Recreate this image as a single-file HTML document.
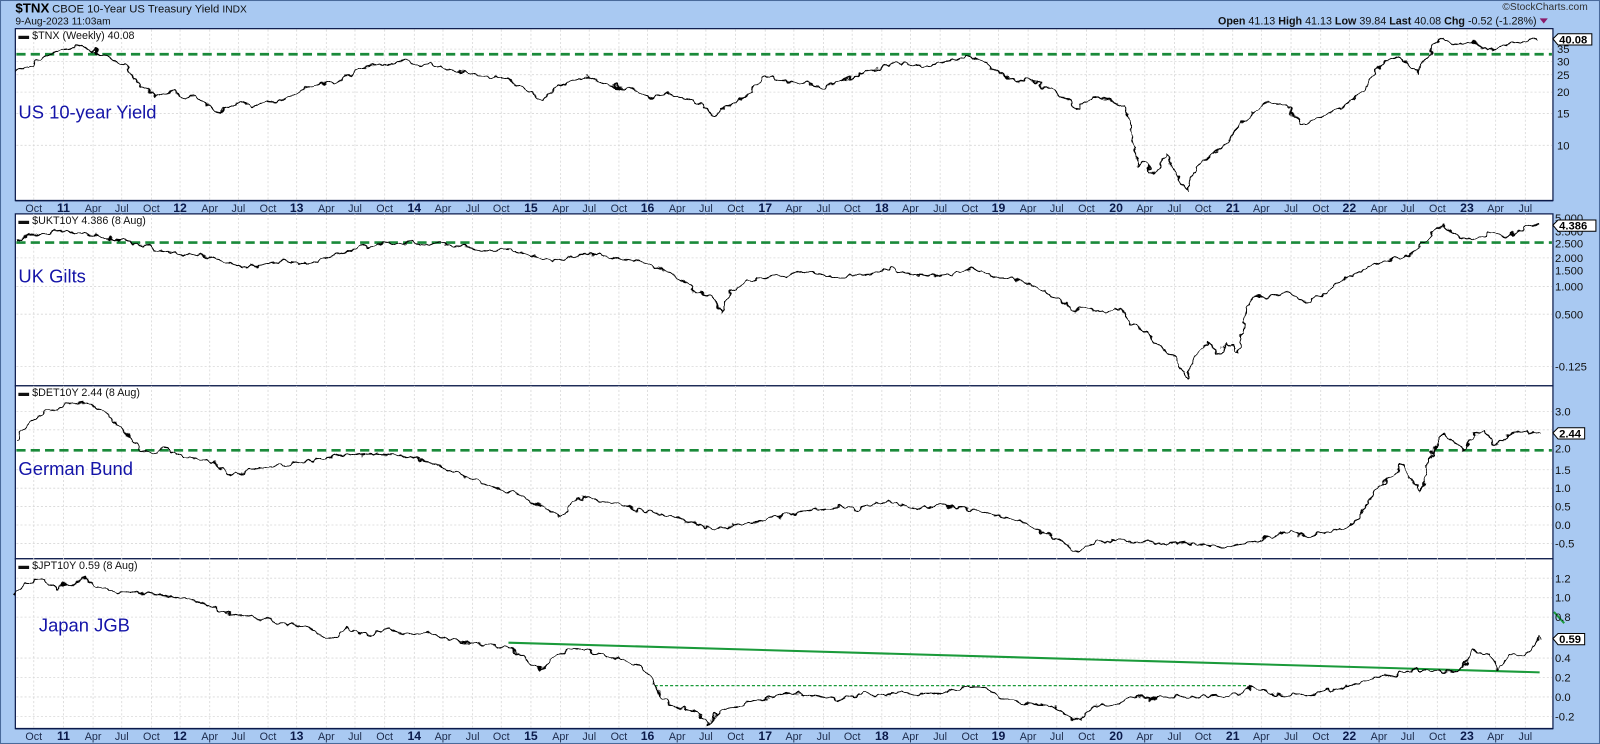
<!DOCTYPE html>
<html><head><meta charset="utf-8"><style>
html,body{margin:0;padding:0;background:#a9c9f2;}
svg{display:block;}
text{font-family:"Liberation Sans",Arial,sans-serif;}
.ax{font-size:10.5px;fill:#1c2a4a;text-anchor:middle;}
.yr{font-size:12px;font-weight:bold;fill:#0b1a4a;text-anchor:middle;}
.rl{font-size:11px;fill:#111;}
.lab{font-size:18px;fill:#1414a8;}
.ph{font-size:10.5px;fill:#111;}
.ser{fill:none;stroke:#000;stroke-width:1.3;stroke-linejoin:round;filter:url(#jit);}
.dash{stroke:#1a8a3a;stroke-width:2.6;stroke-dasharray:9,5;}
.grid line{stroke:#d8d8d8;stroke-width:0.8;stroke-dasharray:2,2;}
</style></head><body>
<svg width="1600" height="744" viewBox="0 0 1564 727" preserveAspectRatio="none" xmlns="http://www.w3.org/2000/svg">
<defs>
<filter id="jit" filterUnits="userSpaceOnUse" x="0" y="0" width="1564" height="727">
<feTurbulence type="fractalNoise" baseFrequency="0.12 0.12" numOctaves="2" seed="5" result="t"/>
<feDisplacementMap in="SourceGraphic" in2="t" scale="9" xChannelSelector="R" yChannelSelector="G"/>
</filter>
</defs>
<rect x="0" y="0" width="1564" height="727" fill="#a9c9f2"/>
<rect x="0.5" y="0.5" width="1563" height="726" fill="none" stroke="#4a6a9a"/>
<text x="15" y="12" font-size="13" font-weight="bold" fill="#000">$TNX</text>
<text x="51" y="12" font-size="11" fill="#111">CBOE 10-Year US Treasury Yield <tspan font-size="10">INDX</tspan></text>
<text x="15" y="24" font-size="10" fill="#111">9-Aug-2023 11:03am</text>
<text x="1552" y="10" font-size="10" fill="#333" text-anchor="end">©StockCharts.com</text>
<text x="1502" y="24" font-size="10.5" fill="#111" text-anchor="end"><tspan font-weight="bold">Open</tspan> 41.13 <tspan font-weight="bold">High</tspan> 41.13 <tspan font-weight="bold">Low</tspan> 39.84 <tspan font-weight="bold">Last</tspan> 40.08 <tspan font-weight="bold">Chg</tspan> -0.52 (-1.28%)</text>
<path d="M1505 18 L1513 18 L1509 23 Z" fill="#8a1a6a"/>

<rect x="15" y="28" width="1503" height="168" fill="#fff" stroke="#0b1a4a" stroke-width="1.2"/>
<rect x="15" y="209" width="1503" height="168" fill="#fff" stroke="#0b1a4a" stroke-width="1.2"/>
<rect x="15" y="377" width="1503" height="169" fill="#fff" stroke="#0b1a4a" stroke-width="1.2"/>
<rect x="15" y="546" width="1503" height="166" fill="#fff" stroke="#0b1a4a" stroke-width="1.2"/>
<line x1="15" y1="196" x2="1518" y2="196" stroke="#0b1a4a" stroke-width="1.5"/>
<line x1="15" y1="712" x2="1518" y2="712" stroke="#0b1a4a" stroke-width="1.5"/>

<g class="grid">
<line x1="33" y1="29" x2="33" y2="711"/><line x1="62" y1="29" x2="62" y2="711"/><line x1="91" y1="29" x2="91" y2="711"/><line x1="119" y1="29" x2="119" y2="711"/><line x1="148" y1="29" x2="148" y2="711"/><line x1="176" y1="29" x2="176" y2="711"/><line x1="205" y1="29" x2="205" y2="711"/><line x1="233" y1="29" x2="233" y2="711"/><line x1="262" y1="29" x2="262" y2="711"/><line x1="290" y1="29" x2="290" y2="711"/><line x1="319" y1="29" x2="319" y2="711"/><line x1="347" y1="29" x2="347" y2="711"/><line x1="376" y1="29" x2="376" y2="711"/><line x1="405" y1="29" x2="405" y2="711"/><line x1="433" y1="29" x2="433" y2="711"/><line x1="462" y1="29" x2="462" y2="711"/><line x1="490" y1="29" x2="490" y2="711"/><line x1="519" y1="29" x2="519" y2="711"/><line x1="548" y1="29" x2="548" y2="711"/><line x1="576" y1="29" x2="576" y2="711"/><line x1="605" y1="29" x2="605" y2="711"/><line x1="633" y1="29" x2="633" y2="711"/><line x1="662" y1="29" x2="662" y2="711"/><line x1="690" y1="29" x2="690" y2="711"/><line x1="719" y1="29" x2="719" y2="711"/><line x1="748" y1="29" x2="748" y2="711"/><line x1="776" y1="29" x2="776" y2="711"/><line x1="805" y1="29" x2="805" y2="711"/><line x1="833" y1="29" x2="833" y2="711"/><line x1="862" y1="29" x2="862" y2="711"/><line x1="890" y1="29" x2="890" y2="711"/><line x1="919" y1="29" x2="919" y2="711"/><line x1="948" y1="29" x2="948" y2="711"/><line x1="976" y1="29" x2="976" y2="711"/><line x1="1005" y1="29" x2="1005" y2="711"/><line x1="1033" y1="29" x2="1033" y2="711"/><line x1="1062" y1="29" x2="1062" y2="711"/><line x1="1091" y1="29" x2="1091" y2="711"/><line x1="1119" y1="29" x2="1119" y2="711"/><line x1="1148" y1="29" x2="1148" y2="711"/><line x1="1176" y1="29" x2="1176" y2="711"/><line x1="1205" y1="29" x2="1205" y2="711"/><line x1="1233" y1="29" x2="1233" y2="711"/><line x1="1262" y1="29" x2="1262" y2="711"/><line x1="1291" y1="29" x2="1291" y2="711"/><line x1="1319" y1="29" x2="1319" y2="711"/><line x1="1348" y1="29" x2="1348" y2="711"/><line x1="1376" y1="29" x2="1376" y2="711"/><line x1="1405" y1="29" x2="1405" y2="711"/><line x1="1434" y1="29" x2="1434" y2="711"/><line x1="1462" y1="29" x2="1462" y2="711"/><line x1="1491" y1="29" x2="1491" y2="711"/>
<line x1="16" y1="48" x2="1517" y2="48"/><line x1="16" y1="60" x2="1517" y2="60"/><line x1="16" y1="73" x2="1517" y2="73"/><line x1="16" y1="90" x2="1517" y2="90"/><line x1="16" y1="111" x2="1517" y2="111"/><line x1="16" y1="142" x2="1517" y2="142"/>
<line x1="16" y1="252" x2="1517" y2="252"/><line x1="16" y1="280" x2="1517" y2="280"/><line x1="16" y1="307" x2="1517" y2="307"/><line x1="16" y1="358" x2="1517" y2="358"/>
<line x1="16" y1="402" x2="1517" y2="402"/><line x1="16" y1="420" x2="1517" y2="420"/><line x1="16" y1="459" x2="1517" y2="459"/><line x1="16" y1="477" x2="1517" y2="477"/><line x1="16" y1="495" x2="1517" y2="495"/><line x1="16" y1="513" x2="1517" y2="513"/><line x1="16" y1="531" x2="1517" y2="531"/>
<line x1="16" y1="565" x2="1517" y2="565"/><line x1="16" y1="584" x2="1517" y2="584"/><line x1="16" y1="603" x2="1517" y2="603"/><line x1="16" y1="643" x2="1517" y2="643"/><line x1="16" y1="662" x2="1517" y2="662"/><line x1="16" y1="681" x2="1517" y2="681"/><line x1="16" y1="700" x2="1517" y2="700"/>
</g>

<g transform="translate(0,207)">
<text class="ax" x="33">Oct</text><text class="yr" x="62">11</text><text class="ax" x="91">Apr</text><text class="ax" x="119">Jul</text><text class="ax" x="148">Oct</text><text class="yr" x="176">12</text><text class="ax" x="205">Apr</text><text class="ax" x="233">Jul</text><text class="ax" x="262">Oct</text><text class="yr" x="290">13</text><text class="ax" x="319">Apr</text><text class="ax" x="347">Jul</text><text class="ax" x="376">Oct</text><text class="yr" x="405">14</text><text class="ax" x="433">Apr</text><text class="ax" x="462">Jul</text><text class="ax" x="490">Oct</text><text class="yr" x="519">15</text><text class="ax" x="548">Apr</text><text class="ax" x="576">Jul</text><text class="ax" x="605">Oct</text><text class="yr" x="633">16</text><text class="ax" x="662">Apr</text><text class="ax" x="690">Jul</text><text class="ax" x="719">Oct</text><text class="yr" x="748">17</text><text class="ax" x="776">Apr</text><text class="ax" x="805">Jul</text><text class="ax" x="833">Oct</text><text class="yr" x="862">18</text><text class="ax" x="890">Apr</text><text class="ax" x="919">Jul</text><text class="ax" x="948">Oct</text><text class="yr" x="976">19</text><text class="ax" x="1005">Apr</text><text class="ax" x="1033">Jul</text><text class="ax" x="1062">Oct</text><text class="yr" x="1091">20</text><text class="ax" x="1119">Apr</text><text class="ax" x="1148">Jul</text><text class="ax" x="1176">Oct</text><text class="yr" x="1205">21</text><text class="ax" x="1233">Apr</text><text class="ax" x="1262">Jul</text><text class="ax" x="1291">Oct</text><text class="yr" x="1319">22</text><text class="ax" x="1348">Apr</text><text class="ax" x="1376">Jul</text><text class="ax" x="1405">Oct</text><text class="yr" x="1434">23</text><text class="ax" x="1462">Apr</text><text class="ax" x="1491">Jul</text>
</g>
<g transform="translate(0,723)">
<text class="ax" x="33">Oct</text><text class="yr" x="62">11</text><text class="ax" x="91">Apr</text><text class="ax" x="119">Jul</text><text class="ax" x="148">Oct</text><text class="yr" x="176">12</text><text class="ax" x="205">Apr</text><text class="ax" x="233">Jul</text><text class="ax" x="262">Oct</text><text class="yr" x="290">13</text><text class="ax" x="319">Apr</text><text class="ax" x="347">Jul</text><text class="ax" x="376">Oct</text><text class="yr" x="405">14</text><text class="ax" x="433">Apr</text><text class="ax" x="462">Jul</text><text class="ax" x="490">Oct</text><text class="yr" x="519">15</text><text class="ax" x="548">Apr</text><text class="ax" x="576">Jul</text><text class="ax" x="605">Oct</text><text class="yr" x="633">16</text><text class="ax" x="662">Apr</text><text class="ax" x="690">Jul</text><text class="ax" x="719">Oct</text><text class="yr" x="748">17</text><text class="ax" x="776">Apr</text><text class="ax" x="805">Jul</text><text class="ax" x="833">Oct</text><text class="yr" x="862">18</text><text class="ax" x="890">Apr</text><text class="ax" x="919">Jul</text><text class="ax" x="948">Oct</text><text class="yr" x="976">19</text><text class="ax" x="1005">Apr</text><text class="ax" x="1033">Jul</text><text class="ax" x="1062">Oct</text><text class="yr" x="1091">20</text><text class="ax" x="1119">Apr</text><text class="ax" x="1148">Jul</text><text class="ax" x="1176">Oct</text><text class="yr" x="1205">21</text><text class="ax" x="1233">Apr</text><text class="ax" x="1262">Jul</text><text class="ax" x="1291">Oct</text><text class="yr" x="1319">22</text><text class="ax" x="1348">Apr</text><text class="ax" x="1376">Jul</text><text class="ax" x="1405">Oct</text><text class="yr" x="1434">23</text><text class="ax" x="1462">Apr</text><text class="ax" x="1491">Jul</text>
</g>

<text class="ph" x="18" y="38">▬ $TNX (Weekly) 40.08</text>
<text class="ph" x="18" y="219">▬ $UKT10Y 4.386 (8 Aug)</text>
<text class="ph" x="18" y="387">▬ $DET10Y 2.44 (8 Aug)</text>
<text class="ph" x="18" y="556">▬ $JPT10Y 0.59 (8 Aug)</text>

<text class="lab" x="18" y="116">US 10-year Yield</text>
<text class="lab" x="18" y="276">UK Gilts</text>
<text class="lab" x="18" y="464">German Bund</text>
<text class="lab" x="38" y="617">Japan JGB</text>

<line class="dash" x1="16" y1="53" x2="1517" y2="53"/>
<line class="dash" x1="16" y1="237" x2="1517" y2="237"/>
<line class="dash" x1="16" y1="440" x2="1517" y2="440"/>

<polyline class="ser" points="16,70 22,66 30,65 36,60 45,55 52,52 62,48 70,47 80,45 88,49 95,50 103,54 110,58 118,62 125,65 130,75 135,80 140,86 145,88 152,92 160,93 168,90 176,92 183,96 190,95 196,98 200,100 207,106 215,110 220,104 225,103 232,101 240,100 248,104 255,102 262,99 270,100 280,96 290,92 295,88 300,85 310,84 320,82 332,78 345,72 352,67 360,65 370,63 380,62 390,60 400,60 410,63 420,62 430,66 440,68 450,70 460,72 470,74 480,75 490,77 500,78 510,86 520,92 525,96 530,98 537,92 545,85 552,82 560,80 568,77 575,75 582,79 590,80 598,83 605,85 612,86 620,88 627,92 634,95 642,93 650,92 660,94 670,95 680,100 690,105 695,110 700,112 705,108 710,105 720,100 730,95 738,85 748,75 754,76 760,78 768,79 775,80 782,81 790,82 798,84 805,85 812,82 820,80 828,77 835,75 842,73 850,70 860,66 870,62 880,63 890,62 898,64 905,65 915,62 925,60 935,58 945,55 952,57 960,60 968,65 975,70 983,75 990,78 1000,79 1010,80 1020,84 1030,88 1038,95 1045,100 1050,104 1055,105 1062,98 1070,95 1078,97 1085,98 1093,102 1100,105 1104,120 1108,140 1110,150 1112,165 1116,158 1120,160 1125,168 1130,170 1135,158 1140,150 1145,162 1150,170 1155,178 1160,185 1165,172 1170,165 1175,158 1180,155 1188,150 1195,145 1200,138 1205,130 1210,125 1215,120 1220,115 1225,110 1232,105 1240,100 1250,102 1260,105 1265,112 1270,120 1278,120 1285,118 1292,114 1300,110 1305,107 1310,105 1315,102 1320,100 1328,92 1335,85 1342,74 1350,65 1358,58 1365,55 1370,57 1375,60 1380,66 1385,70 1390,62 1395,55 1402,45 1410,38 1415,40 1420,42 1425,44 1430,45 1435,42 1440,40 1447,46 1455,50 1460,47 1465,45 1472,44 1480,42 1488,41 1495,40 1500,39 1505,38"/>
<polyline class="ser" points="16,235 28,231 40,228 50,226 62,225 70,226 80,228 90,230 100,232 110,233 120,235 130,238 140,240 150,243 160,245 168,247 176,248 188,249 200,250 210,252 220,255 230,259 240,262 250,260 260,258 270,256 280,255 290,257 300,258 310,255 320,252 330,248 340,245 350,242 360,240 370,239 380,238 390,237 400,237 410,237 420,238 430,239 440,240 455,241 470,243 485,244 500,245 510,247 521,250 530,252 540,255 550,252 560,250 570,249 580,248 590,250 600,252 610,253 620,255 630,257 640,260 650,265 660,270 670,277 680,285 688,287 695,290 700,298 705,305 710,295 715,285 722,280 730,275 740,273 748,272 760,270 770,268 780,266 790,265 800,268 810,270 820,270 830,270 840,269 850,268 860,265 870,262 880,265 890,268 900,269 910,270 920,269 930,268 940,265 950,262 958,265 965,268 972,270 980,272 990,273 1000,275 1010,280 1020,285 1030,290 1040,295 1045,302 1050,305 1055,302 1060,300 1070,303 1080,305 1088,302 1095,300 1102,310 1110,320 1115,322 1120,325 1125,330 1130,335 1135,340 1140,345 1145,346 1150,348 1155,360 1160,370 1165,355 1170,345 1175,340 1180,335 1185,340 1190,345 1195,340 1200,335 1205,340 1210,345 1215,322 1220,300 1225,290 1232,290 1240,290 1250,288 1260,285 1268,290 1275,295 1282,292 1290,290 1298,285 1305,280 1312,275 1320,270 1330,265 1340,260 1348,257 1355,255 1362,253 1370,252 1378,248 1385,245 1392,236 1400,228 1405,224 1410,222 1418,226 1425,230 1432,233 1440,235 1448,231 1455,228 1462,230 1470,232 1478,228 1485,225 1492,222 1500,220 1505,218"/>
<polyline class="ser" points="16,430 20,425 25,420 32,412 40,405 48,402 55,400 62,397 70,395 78,394 85,393 90,396 95,398 102,404 110,410 118,418 125,425 132,432 140,440 145,443 150,445 155,441 160,438 168,442 176,445 186,447 195,448 202,450 210,452 218,459 225,465 232,462 240,460 250,458 260,456 270,455 280,455 290,452 300,450 310,449 320,448 330,447 340,446 350,444 360,443 370,444 380,445 390,445 400,445 410,449 420,452 430,456 440,460 450,464 460,468 470,472 480,475 490,478 500,480 510,485 521,490 530,495 540,500 545,503 550,505 555,497 560,490 568,487 575,485 582,488 590,490 600,492 610,495 622,498 634,500 647,503 660,505 670,508 680,512 690,515 700,518 710,515 720,512 730,511 740,510 750,507 760,505 770,502 780,500 790,499 800,498 810,496 820,495 830,497 840,498 850,494 862,490 870,491 880,492 890,495 900,497 910,495 920,493 930,495 940,497 950,499 960,500 970,503 980,505 990,508 1000,510 1010,515 1020,520 1030,525 1040,530 1045,534 1050,538 1055,536 1060,535 1070,531 1080,528 1090,529 1100,530 1110,529 1120,528 1130,530 1140,532 1150,531 1160,530 1170,532 1180,533 1190,534 1200,535 1210,532 1220,530 1230,527 1240,525 1250,522 1260,520 1270,523 1280,525 1290,522 1300,520 1310,517 1320,515 1328,505 1335,495 1340,487 1345,480 1352,472 1360,465 1365,460 1370,455 1375,462 1380,470 1385,475 1390,480 1395,460 1400,440 1405,432 1410,425 1415,428 1420,430 1425,435 1430,440 1435,432 1440,425 1445,422 1450,420 1455,428 1460,435 1467,430 1475,425 1482,423 1490,420 1497,422 1505,425"/>
<line x1="497" y1="628" x2="1505" y2="657" stroke="#1a9a3a" stroke-width="2"/>
<line x1="640" y1="670" x2="1220" y2="670" stroke="#1a9a3a" stroke-width="1.2" stroke-dasharray="3,2"/>
<line x1="1519" y1="598" x2="1529" y2="609" stroke="#1a9a3a" stroke-width="2"/>
<polyline class="ser" points="16,580 20,575 25,570 32,567 40,565 48,570 55,575 62,572 70,570 78,567 85,565 92,570 100,575 110,577 120,578 130,579 140,580 150,581 160,582 168,583 176,585 188,587 200,590 210,594 220,598 230,601 240,603 250,604 260,605 270,608 280,610 290,611 300,612 310,618 320,625 330,620 340,615 350,618 360,620 370,617 380,615 390,618 400,620 410,619 420,618 430,622 440,625 450,627 460,628 470,629 480,630 490,632 500,633 508,639 515,645 522,650 530,655 537,647 545,640 552,637 560,635 568,635 575,635 582,638 590,640 600,643 610,645 618,648 625,650 630,655 634,660 640,670 645,680 652,685 660,690 670,693 680,695 686,702 692,708 696,703 700,698 710,694 720,690 730,687 740,685 750,682 760,680 770,678 780,677 790,679 800,680 810,682 820,684 830,681 840,678 850,679 862,680 870,678 880,676 890,677 900,678 910,678 920,678 930,675 940,672 950,671 960,670 968,675 975,680 982,683 990,685 1000,687 1010,688 1020,689 1030,690 1038,695 1045,700 1050,703 1055,705 1062,697 1070,690 1080,689 1090,688 1100,684 1110,680 1118,682 1125,683 1135,681 1145,680 1155,681 1165,681 1175,680 1185,680 1195,679 1205,678 1215,675 1225,672 1232,674 1240,676 1250,678 1260,680 1270,679 1280,678 1290,677 1300,675 1310,672 1320,670 1330,666 1340,662 1350,661 1360,660 1370,657 1380,655 1390,655 1400,655 1410,656 1420,657 1425,656 1430,655 1435,645 1440,635 1447,637 1455,640 1460,648 1465,655 1470,647 1475,640 1482,640 1490,640 1495,635 1500,630 1503,622 1505,625"/>

<g class="rl">
<text x="1522" y="52">35</text><text x="1522" y="64">30</text><text x="1522" y="77">25</text><text x="1522" y="94">20</text><text x="1522" y="115">15</text><text x="1522" y="146">10</text>
<text x="1520" y="217">5.000</text><text x="1520" y="230">3.500</text><text x="1520" y="242">2.500</text><text x="1520" y="256">2.000</text><text x="1520" y="268">1.500</text><text x="1520" y="284">1.000</text><text x="1520" y="311">0.500</text><text x="1520" y="362">-0.125</text>
<text x="1520" y="406">3.0</text><text x="1520" y="442">2.0</text><text x="1520" y="463">1.5</text><text x="1520" y="481">1.0</text><text x="1520" y="499">0.5</text><text x="1520" y="517">0.0</text><text x="1520" y="535">-0.5</text>
<text x="1520" y="569">1.2</text><text x="1520" y="588">1.0</text><text x="1520" y="607">0.8</text><text x="1520" y="647">0.4</text><text x="1520" y="666">0.2</text><text x="1520" y="685">0.0</text><text x="1520" y="704">-0.2</text>
</g>
<g font-size="11" font-weight="bold">
<path d="M1518 38 L1523 33 L1556 33 L1556 44 L1523 44 Z" fill="#fff" stroke="#000"/><text x="1524" y="42.5">40.08</text>
<path d="M1518 220 L1523 215 L1560 215 L1560 226 L1523 226 Z" fill="#fff" stroke="#000"/><text x="1524" y="224.5">4.386</text>
<path d="M1518 423 L1523 418 L1549 418 L1549 429 L1523 429 Z" fill="#fff" stroke="#000"/><text x="1524" y="427.5">2.44</text>
<path d="M1518 624 L1523 619 L1549 619 L1549 630 L1523 630 Z" fill="#fff" stroke="#000"/><text x="1524" y="628.5">0.59</text>
</g>
</svg>
</body></html>
